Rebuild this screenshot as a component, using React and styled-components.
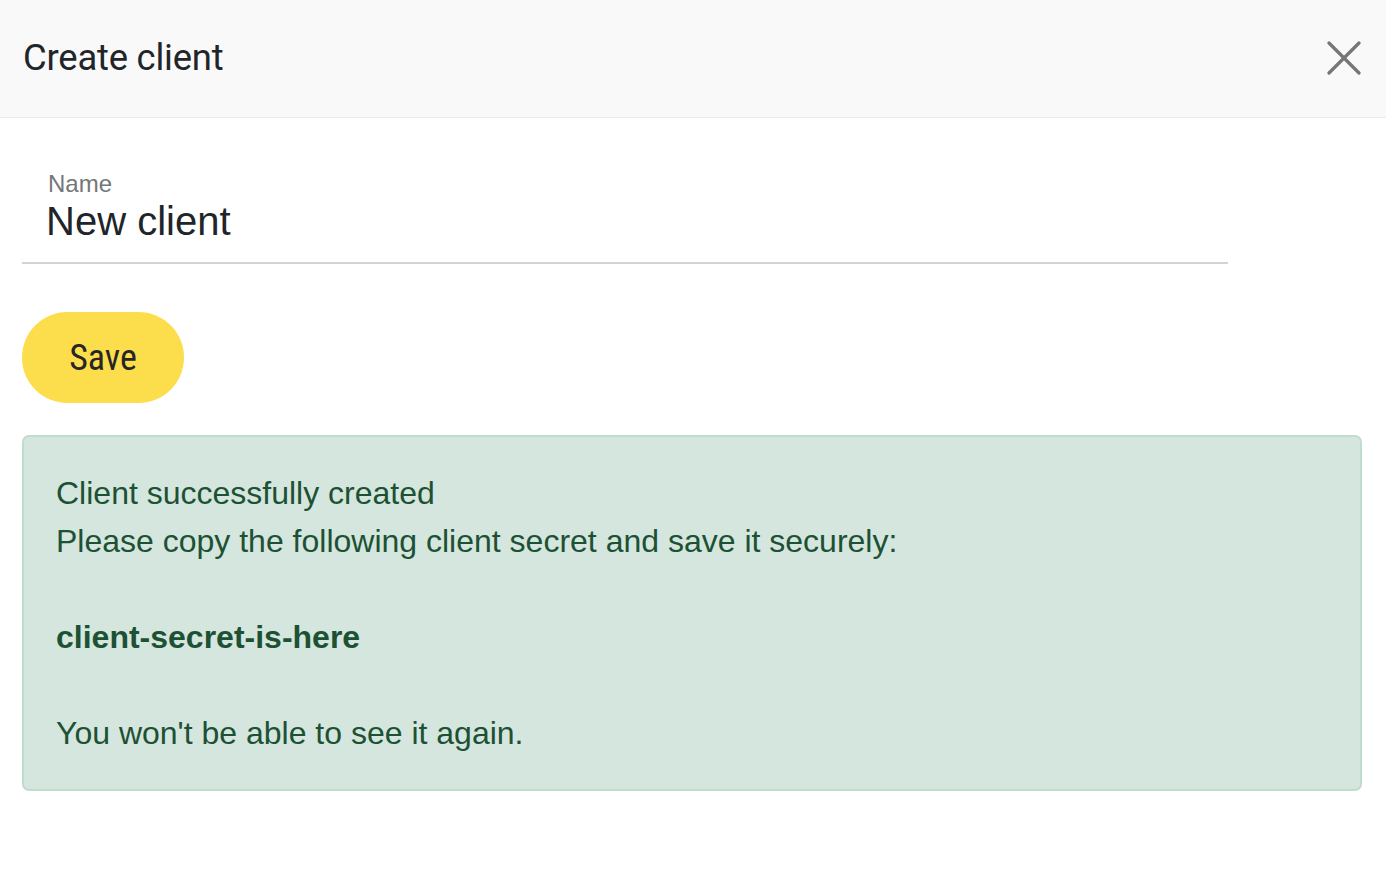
import React from "react";
import styled, { createGlobalStyle } from "styled-components";

const Global = createGlobalStyle`
  html, body { margin: 0; padding: 0; background: #ffffff; }
  body { font-family: "Liberation Sans", Arial, sans-serif; }
  * { box-sizing: border-box; }
`;

const Page = styled.div`
  width: 1386px;
  min-height: 872px;
  background: #ffffff;
`;

const Header = styled.header`
  height: 118px;
  background: #f9f9f9;
  border-bottom: 1px solid #ececec;
  display: flex;
  align-items: center;
  justify-content: space-between;
  padding: 0 24px 2px 23px;
`;

const Title = styled.h1`
  margin: 0;
  font-family: Roboto, "Liberation Sans", sans-serif;
  font-weight: 400;
  font-size: 36.4px;
  color: #212529;
  letter-spacing: -0.2px;
`;

const CloseButton = styled.button`
  border: 0;
  background: transparent;
  padding: 0;
  width: 36px;
  height: 36px;
  display: flex;
  align-items: center;
  justify-content: center;
  cursor: pointer;
  color: #767676;
`;

const Body = styled.main`
  padding: 32px 24px 0 22px;
  display: flex;
  flex-direction: column;
  align-items: flex-start;
`;

const Field = styled.label`
  display: flex;
  flex-direction: column;
  width: 90%;
  padding: 20px 24px 18px 26px;
  border-bottom: 2px solid #d0d4d7;
`;

const FieldLabel = styled.span`
  font-size: 24px;
  line-height: 28px;
  color: #75767a;
`;

const FieldInput = styled.input`
  border: 0;
  outline: none;
  background: transparent;
  padding: 0;
  margin: 0 0 0 -2px;
  font-family: "Liberation Sans", Arial, sans-serif;
  font-size: 40px;
  line-height: 46px;
  height: 46px;
  color: #212529;
`;

const SaveButton = styled.button`
  margin-top: 48px;
  width: 162px;
  height: 91px;
  border: 0;
  border-radius: 46px;
  background: #fcdd4b;
  color: #262626;
  font-family: "Roboto Condensed", "Liberation Sans Narrow", "DejaVu Sans Condensed", sans-serif;
  font-stretch: condensed;
  font-size: 36px;
  font-weight: 400;
  padding: 0;
  cursor: pointer;
`;

const Alert = styled.div`
  margin-top: 32px;
  width: 100%;
  border: 2px solid #bfdccd;
  border-radius: 7px;
  background: #d4e6de;
  color: #1d5134;
  padding: 32px 32px 32px 32px;
  font-size: 32px;
  line-height: 48px;
`;

const AlertLine = styled.div`
  min-height: 48px;
  font-weight: ${(p) => (p.$bold ? 700 : 400)};
`;

export default function App() {
  return (
    <Page>
      <Global />
      <Header>
        <Title>Create client</Title>
        <CloseButton aria-label="Close">
          <svg width="34" height="34" viewBox="0 0 34 34" fill="none">
            <path d="M2 2 L32 32 M32 2 L2 32" stroke="currentColor" strokeWidth="3.2" strokeLinecap="round" />
          </svg>
        </CloseButton>
      </Header>
      <Body>
        <Field>
          <FieldLabel>Name</FieldLabel>
          <FieldInput defaultValue="New client" />
        </Field>
        <SaveButton>Save</SaveButton>
        <Alert>
          <AlertLine>Client successfully created</AlertLine>
          <AlertLine>Please copy the following client secret and save it securely:</AlertLine>
          <AlertLine />
          <AlertLine $bold>client-secret-is-here</AlertLine>
          <AlertLine />
          <AlertLine>You won't be able to see it again.</AlertLine>
        </Alert>
      </Body>
    </Page>
  );
}
